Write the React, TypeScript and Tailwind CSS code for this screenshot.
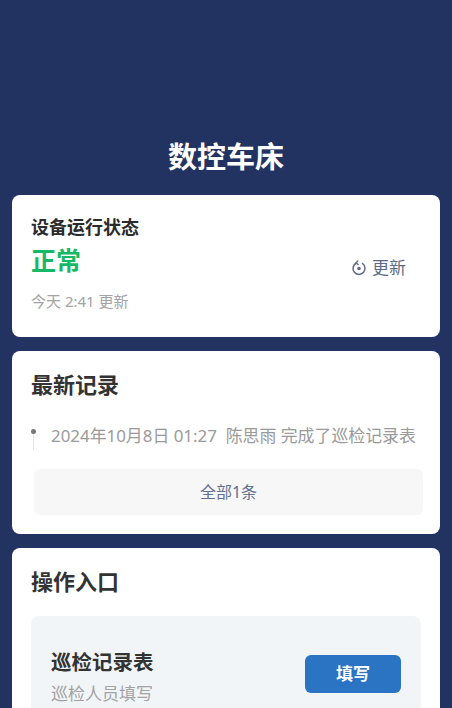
export default function App() {
  return (
    <div className="h-[708px] w-[452px] overflow-hidden bg-[#233361] px-3 pt-[136px] font-['Noto_Sans','Noto_Sans_CJK_SC',sans-serif]">
      <h1 className="mb-[18px] text-center text-[29px] leading-[41px] font-bold text-white">数控车床</h1>

      <section className="mb-[14px] flex h-[142px] flex-col rounded-[8px] bg-white pl-[19px] pr-[34px] pt-[19px]">
        <div className="text-[18px] leading-[26px] font-semibold text-[#2b2b2b]">设备运行状态</div>
        <div className="mt-[2px] flex items-start justify-between">
          <div className="text-[25px] leading-[36px] font-bold text-[#17b865]">正常</div>
          <div className="mt-[13px] flex items-center gap-[5px] text-[17px] leading-[26px] text-[#5d6a87]">
            <svg width="16" height="16" viewBox="0 0 16 16" fill="none" stroke="#5d6a87" strokeWidth="1.5">
              <path d="M11 3.2A6 6 0 1 1 5.4 3" />
              <path d="M7.2 0.6 5 3 7.6 4.8" strokeWidth="1.4" />
              <circle cx="8" cy="8.5" r="1.8" fill="#5d6a87" stroke="none" />
            </svg>
            更新
          </div>
        </div>
        <div className="mt-[9px] text-[15px] leading-[22px] text-[#a3a3a3]">今天 2:41 更新</div>
      </section>

      <section className="mb-[14px] h-[183px] rounded-[8px] bg-white pl-[19px] pr-[17px] pt-[17px]">
        <h2 className="text-[22px] leading-[32px] font-bold text-[#333333]">最新记录</h2>
        <div className="mt-[23px] flex h-[32px] items-start gap-[15px]">
          <div className="flex w-[5px] shrink-0 flex-col items-center pt-[6px]">
            <span className="size-[5px] rounded-full bg-[#777777]" />
            <span className="h-[16px] w-px bg-[#e4e4e4]" />
          </div>
          <div className="text-[16.9px] leading-[25px] whitespace-nowrap text-[#9a9a9a]">2024年10月8日 01:27&nbsp; 陈思雨 完成了巡检记录表</div>
        </div>
        <div className="mt-[14px] ml-[3px] flex h-[46px] w-[389px] items-center justify-center rounded-[6px] bg-[#f7f7f8] text-[16px] text-[#62708f]">全部1条</div>
      </section>

      <section className="h-[300px] rounded-[8px] bg-white px-[19px] pt-[17px]">
        <h2 className="text-[22px] leading-[32px] font-bold text-[#333333]">操作入口</h2>
        <div className="mt-[19px] flex h-[140px] items-start justify-between rounded-[8px] bg-[#f2f5f8] pl-[20px] pr-[20px] pt-[32px]">
          <div>
            <div className="text-[20.5px] leading-[29px] font-bold text-[#333333]">巡检记录表</div>
            <div className="mt-[4px] text-[17px] leading-[25px] text-[#a3a3a3]">巡检人员填写</div>
          </div>
          <button className="mt-[7px] h-[38px] w-[96px] rounded-[6px] bg-[#2b74c4] text-[17px] font-semibold text-white">填写</button>
        </div>
      </section>
    </div>
  );
}
